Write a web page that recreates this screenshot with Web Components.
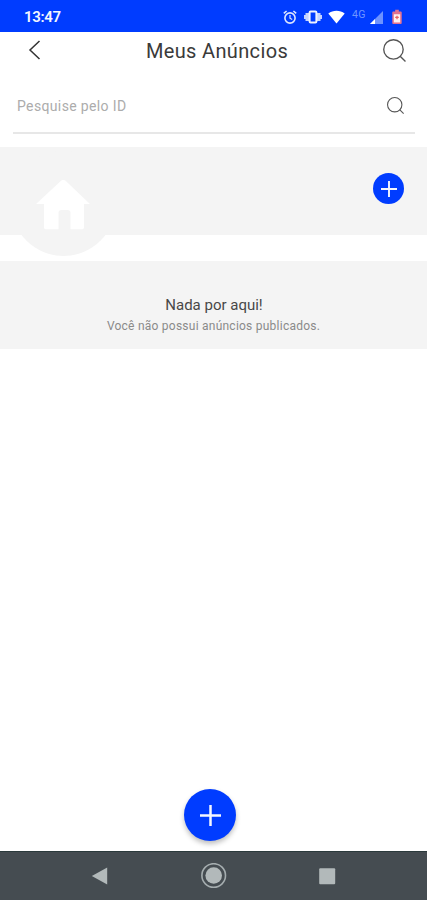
<!DOCTYPE html>
<html lang="pt-BR">
<head>
<meta charset="utf-8">
<meta name="viewport" content="width=device-width, initial-scale=1">
<title>Meus Anúncios</title>
<style>
  html, body {
    margin: 0;
    height: 100%;
  }

  body {
    font-family: Roboto, "Liberation Sans", sans-serif;
    background: #fff;
    overflow: hidden;
  }
</style>
</head>
<body>
<my-ads-app></my-ads-app>

<script>
const define = (name, css, html) => {
  customElements.define(name, class extends HTMLElement {
    constructor() {
      super();
      const shadow = this.attachShadow({ mode: "open" });
      shadow.innerHTML = `<style>${css}</style>${html}`;
    }
  });
};

define("status-bar", `
  :host {
    display: flex;
    align-items: center;
    box-sizing: border-box;
    height: 32px;
    flex: none;
    padding: 2px 25px 0 24px;
    background: #003cff;
    color: #f4f6ff;
  }
  time {
    flex: 1;
    font-size: 15px;
    font-weight: 600;
    line-height: 18px;
    letter-spacing: -.3px;
  }
  svg { display: block; flex: none; }
  .alarm { margin-right: 7px; }
  .vibrate { margin-right: 6px; }
  .wifi { margin-right: 7px; }
  .net {
    width: 14px;
    margin-right: 4px;
    font-size: 10.5px;
    line-height: 12px;
    letter-spacing: .4px;
    color: #6f95ff;
    transform: translateY(-2px);
  }
  .signal { margin-right: 9px; }
`, `
  <time>13:47</time>
  <svg class="alarm" width="14" height="15" viewBox="0 0 14 15" fill="none" stroke="#dce5ff" stroke-width="1.6">
    <circle cx="7" cy="8" r="5.1"/>
    <path d="M7 5v3.2l2.2 1.3" stroke-width="1.2"/>
    <path d="M.8 3.4 3.6 1M13.2 3.4 10.4 1"/>
  </svg>
  <svg class="vibrate" width="18" height="14" viewBox="0 0 18 14">
    <path d="M0 5h1.500V3H5v8H1.500V9H0ZM18 5h-1.500V3H13v8h3.500V9H18Z" fill="#c4d3ff"/>
    <rect x="5.600" y="1.400" width="6.800" height="11.200" rx="1" fill="none" stroke="#eef2ff" stroke-width="2"/>
  </svg>
  <svg class="wifi" width="17" height="14" viewBox="0 0 17 14">
    <path d="M.3 3.500C5-.3 12-.3 16.700 3.500L8.500 13.600Z" fill="#fff"/>
  </svg>
  <span class="net">4G</span>
  <svg class="signal" width="13" height="13" viewBox="0 0 13 13">
    <path d="M13 0v13H0Z" fill="#6e93ff"/>
    <path d="M5 8v5H0Z" fill="#fff"/>
  </svg>
  <svg class="battery" width="10" height="16" viewBox="0 0 11 16">
    <path d="M3.500 0h4v2h2.200c.6 0 1 .4 1 1v11.700c0 .6-.4 1-1 1H1.300c-.6 0-1-.4-1-1V3c0-.6.4-1 1-1h2.200Z" fill="#e2718f"/>
    <path d="M2 5h7v9H2Z" fill="#fff0f1"/>
    <path d="M5.500 6.500v4M3.500 8.500h4" stroke="#e8605f" stroke-width="1.400"/>
  </svg>
`);

customElements.define("search-icon", class extends HTMLElement {
  constructor() {
    super();
    const size = this.getAttribute("size");
    const stroke = this.getAttribute("stroke");
    this.attachShadow({ mode: "open" }).innerHTML = `
      <style>
        :host { display: block; flex: none; color: #555; }
        svg { display: block; }
      </style>
      <svg width="${size}" height="${size}" viewBox="0 0 22 22" fill="none" stroke="currentColor" stroke-width="${stroke}">
        <circle cx="10" cy="10" r="9.300"/>
        <path d="M16.400 16.400 21.500 21.500"/>
      </svg>
    `;
  }
});

define("page-header", `
  :host {
    display: grid;
    grid-template-columns: 60px 1fr 60px;
    align-items: center;
    flex: none;
    height: 36px;
  }
  .back { display: block; margin-left: 28px; }
  h1 {
    margin: 0;
    padding: 2px 0 0 7px;
    text-align: center;
    font-size: 20px;
    font-weight: 400;
    line-height: 24px;
    letter-spacing: .35px;
    color: #3a3a3a;
  }
  ::slotted(search-icon) { margin-left: 16px; }
`, `
  <svg class="back" width="13" height="20" viewBox="0 0 13 20" fill="none" stroke="#333" stroke-width="1.500">
    <path d="M11.500 1 2 10l9.500 9"/>
  </svg>
  <h1><slot></slot></h1>
  <slot name="action"></slot>
`);

define("search-field", `
  :host {
    display: flex;
    align-items: center;
    justify-content: space-between;
    box-sizing: border-box;
    flex: none;
    height: 55px;
    margin: 11px 12px 13px 13px;
    padding: 0 11px 0 4px;
    border-bottom: 2px solid #e7e7e7;
  }
  span {
    font-size: 14px;
    line-height: 18px;
    padding-top: 1px;
    letter-spacing: .36px;
    color: #acacac;
  }
`, `
  <span><slot></slot></span>
  <search-icon size="17" stroke="1.400"></search-icon>
`);

define("add-button", `
  :host {
    display: flex;
    align-items: center;
    justify-content: center;
    flex: none;
    width: 31px;
    height: 31px;
    border-radius: 50%;
    background: #003cff;
  }
  :host([floating]) {
    width: 52px;
    height: 52px;
    box-shadow: 0 3px 5px rgba(0, 0, 0, .25);
  }
  svg { width: 16px; height: 16px; }
  :host([floating]) svg { width: 21px; height: 21px; }
`, `
  <svg viewBox="0 0 16 16" stroke="#f4f6ff" stroke-width="1.900">
    <path d="M8 0v16M0 8h16"/>
  </svg>
`);

define("ad-banner", `
  :host {
    display: flex;
    align-items: flex-start;
    justify-content: space-between;
    box-sizing: border-box;
    flex: none;
    height: 88px;
    margin-bottom: 26px;
    padding: 4px 23px 0 11px;
    background: #f4f4f4;
  }
  /* the avatar is taller than the band and hangs out below it */
  .avatar {
    display: flex;
    justify-content: center;
    box-sizing: border-box;
    width: 105px;
    height: 105px;
    padding: 29px 1px 0 0;
    border-radius: 50%;
    background: #f4f4f4;
  }
  ::slotted(*) { margin-top: 22px; }
`, `
  <div class="avatar">
    <svg width="54" height="50" viewBox="0 0 54 50">
      <path d="M25 .7c1.300-1 3.300-1 4.600 0L54 24h-6v23.500c0 1-.9 1.800-2 1.800H34.500V33c0-2-1-3-3-3h-6c-2 0-3 1-3 3v16.300H10c-1.100 0-2-.8-2-1.800V24H0Z" fill="#fff"/>
    </svg>
  </div>
  <slot></slot>
`);

define("empty-state", `
  :host {
    display: flex;
    flex-direction: column;
    align-items: center;
    box-sizing: border-box;
    flex: none;
    height: 88px;
    padding-top: 34px;
    background: #f4f4f4;
    text-align: center;
  }
  .title {
    font-size: 15px;
    line-height: 20px;
    padding-left: 1px;
    color: #484848;
  }
  .text {
    font-size: 12px;
    line-height: 16px;
    margin-top: 3px;
    letter-spacing: .24px;
    color: #8a8a8a;
  }
`, `
  <div class="title"><slot name="title"></slot></div>
  <div class="text"><slot></slot></div>
`);

define("nav-bar", `
  :host {
    display: flex;
    align-items: center;
    justify-content: space-between;
    box-sizing: border-box;
    flex: none;
    height: 49px;
    padding: 0 91px;
    border-top: 1px solid #2b3a3c;
    background: #454c51;
  }
  svg { display: block; }
`, `
  <svg width="17" height="18" viewBox="0 0 17 18"><path d="M16.200 .500v17L.800 9Z" fill="#b2b9ba"/></svg>
  <svg width="26" height="26" viewBox="0 0 26 26">
    <circle cx="12.700" cy="12.500" r="11.800" fill="none" stroke="#a5adaf" stroke-width="1.600"/>
    <circle cx="12.700" cy="12.500" r="8.300" fill="#b2b9ba"/>
  </svg>
  <svg width="17" height="17" viewBox="0 0 17 17"><rect x=".2" y=".2" width="16" height="16" rx="1" fill="#b2b9ba"/></svg>
`);

define("my-ads-app", `
  :host {
    display: flex;
    flex-direction: column;
    height: 900px;
    background: #fff;
  }
  main {
    display: flex;
    flex-direction: column;
    flex: 1;
  }
  .bottom {
    display: flex;
    justify-content: center;
    margin-top: auto;
    padding: 0 7px 10px 0;
  }
`, `
  <status-bar></status-bar>
  <page-header>
    Meus Anúncios
    <search-icon slot="action" size="23" stroke="1.300"></search-icon>
  </page-header>
  <main>
    <search-field>Pesquise pelo ID</search-field>
    <ad-banner><add-button></add-button></ad-banner>
    <empty-state>
      <span slot="title">Nada por aqui!</span>
      Você não possui anúncios publicados.
    </empty-state>
    <div class="bottom"><add-button floating></add-button></div>
  </main>
  <nav-bar></nav-bar>
`);
</script>
</body>
</html>
